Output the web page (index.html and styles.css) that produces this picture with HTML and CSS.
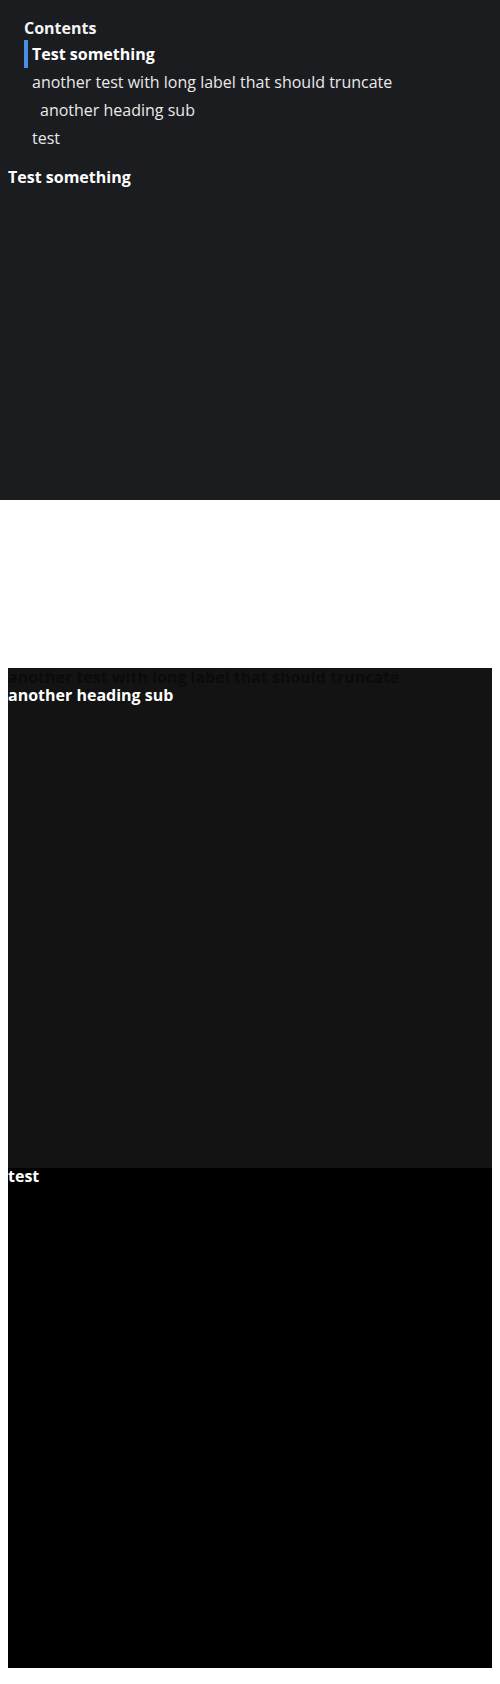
FILE: index.html
```html
<!DOCTYPE html>
<html lang="en">
<head>
<meta charset="utf-8">
<title>Contents</title>
<link rel="stylesheet" href="styles.css">
</head>
<body>
<div class="intro">
  <nav class="toc">
    <div class="toc-title">Contents</div>
    <ul class="toc-list">
      <li class="toc-item active">Test something</li>
      <li class="toc-item">another test with long label that should truncate</li>
      <li class="toc-item sub">another heading sub</li>
      <li class="toc-item">test</li>
    </ul>
  </nav>
  <h2 class="heading">Test something</h2>
</div>
<div class="spacer"></div>
<section class="panel panel-grey">
  <h2 class="heading heading-dark">another test with long label that should truncate</h2>
  <h3 class="heading">another heading sub</h3>
</section>
<section class="panel panel-black">
  <h2 class="heading">test</h2>
</section>
</body>
</html>
```

FILE: styles.css
```css
html, body {
  margin: 0;
  padding: 0;
  background: #ffffff;
}
body {
  font-family: "Open Sans", "Noto Sans", sans-serif;
  font-size: 16px;
  color: #f2f2f2;
  padding-bottom: 16px;
}
.intro {
  height: 500px;
  background: #1b1c20;
  padding: 0 8px;
  box-sizing: border-box;
  overflow: hidden;
}
.toc {
  padding: 16px 0 0 16px;
  margin-bottom: 14px;
}
.toc-title {
  font-weight: 700;
  line-height: 24px;
  color: #f4f4f4;
}
.toc-list {
  list-style: none;
  margin: 0;
  padding: 0;
}
.toc-item {
  line-height: 28px;
  padding-left: 4px;
  border-left: 4px solid transparent;
  white-space: nowrap;
  overflow: hidden;
  text-overflow: ellipsis;
  color: #e9e9e9;
}
.toc-item.active {
  border-left-color: #4a8ee6;
  font-weight: 700;
  color: #ffffff;
}
.toc-item.sub {
  padding-left: 12px;
}
.heading {
  margin: 0;
  font-size: 16px;
  font-weight: 700;
  line-height: 22px;
  color: #ffffff;
}
.spacer {
  height: 168px;
}
.panel {
  margin: 0 8px;
  height: 500px;
}
.panel .heading {
  line-height: 17px;
}
.panel-grey {
  background: #131313;
}
.panel-grey .heading-dark {
  color: #0b0b0b;
  line-height: 19px;
}
.panel-black {
  background: #000000;
}
```
